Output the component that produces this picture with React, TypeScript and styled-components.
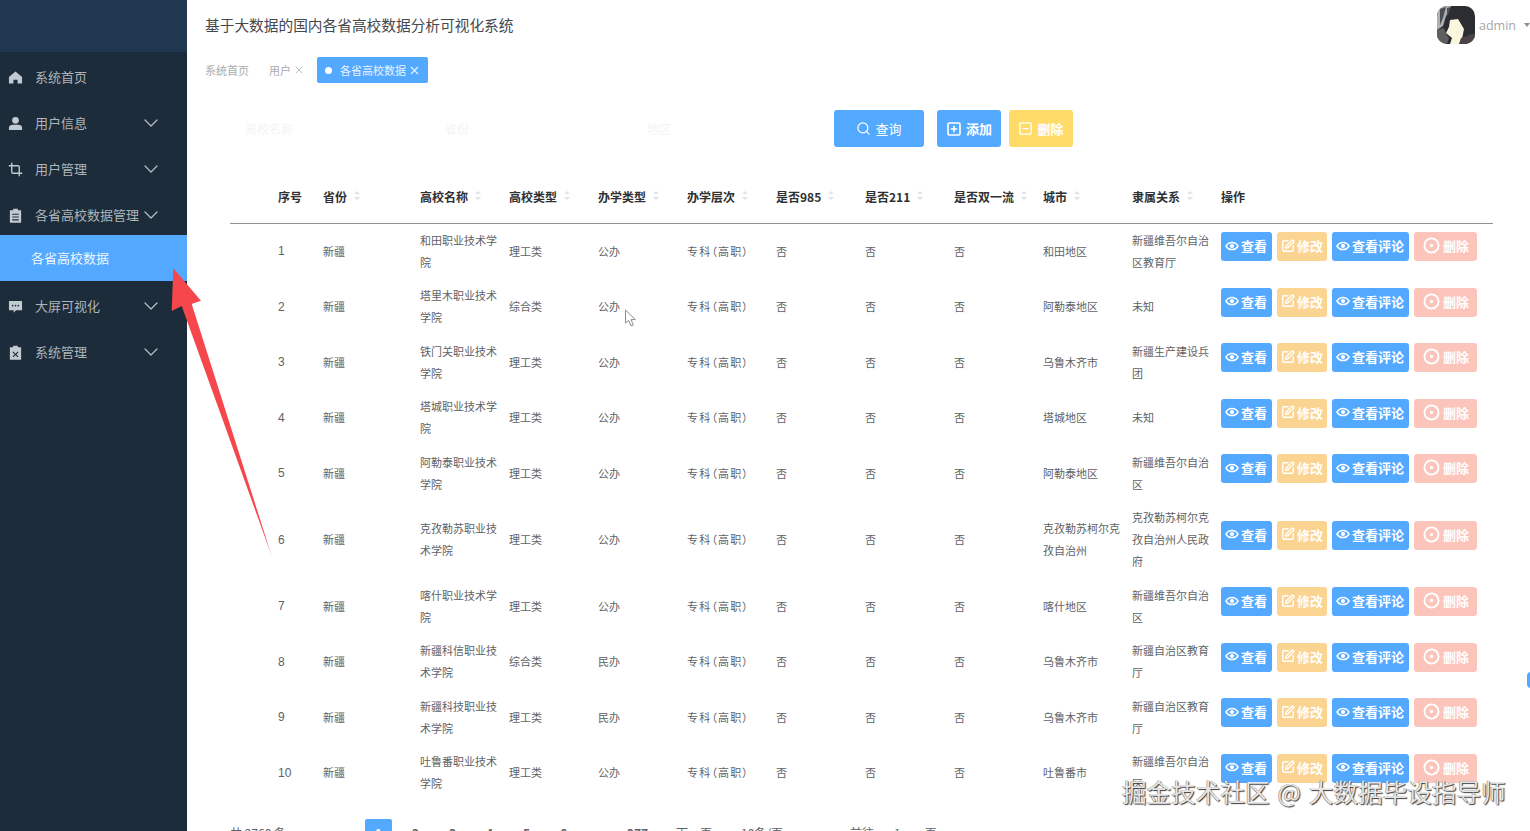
import React from "react";
import styled, { createGlobalStyle } from "styled-components";
import { ChevronDown, Crop, Search, SquarePen, CircleDot, SquarePlus, SquareMinus, X } from "lucide-react";

const FONT = `"Noto Sans CJK SC", "Noto Sans", sans-serif`;

const GlobalStyle = createGlobalStyle`
  html, body, #root {
    margin: 0;
    height: 100%;
  }
  body {
    font-family: ${FONT};
    background: #fff;
    overflow: hidden;
  }
`;

const HomeIcon = () => (
  <svg width="15" height="15" viewBox="0 0 16 16" fill="#c3cad0">
    <path d="M8 1.5 15 7.5V14.5H10.2V10.3H5.8V14.5H1V7.5Z" />
  </svg>
);

const UserIcon = () => (
  <svg width="15" height="15" viewBox="0 0 16 16" fill="#c3cad0">
    <circle cx="8" cy="4.6" r="3.6" />
    <path d="M1 15V12.4C1 10.4 3 9.4 5 9.4H11C13 9.4 15 10.4 15 12.4V15Z" />
  </svg>
);

const OrderIcon = () => (
  <svg width="15" height="15" viewBox="0 0 16 16" fill="#c3cad0">
    <path d="M5.5 0.8H10.5V2.4H14V15.6H2V2.4H5.5Z" />
    <path d="M4.5 6H11.5V7.2H4.5ZM4.5 9H11.5V10.2H4.5ZM4.5 12H11.5V13.2H4.5Z" fill="#1c2c3a" />
  </svg>
);

const CommentIcon = () => (
  <svg width="15" height="15" viewBox="0 0 16 16" fill="#c3cad0">
    <path d="M1 2H15V12H8.6L6 14.6V12H1Z" />
    <circle cx="5" cy="7" r="0.9" fill="#1c2c3a" />
    <circle cx="8" cy="7" r="0.9" fill="#1c2c3a" />
    <circle cx="11" cy="7" r="0.9" fill="#1c2c3a" />
  </svg>
);

const ReleaseIcon = () => (
  <svg width="15" height="15" viewBox="0 0 16 16" fill="#c3cad0">
    <path d="M5.5 0.8H10.5V2.4H14V15.6H2V2.4H5.5Z" />
    <path d="M5.6 7 8 9.2 10.4 7 11.2 7.8 8.9 10 11.2 12.2 10.4 13 8 10.8 5.6 13 4.8 12.2 7.1 10 4.8 7.8Z" fill="#1c2c3a" />
  </svg>
);

const EyeIcon = () => (
  <svg width="14" height="14" viewBox="0 0 14 14" fill="none">
    <path d="M1 7C2.4 4.6 4.5 3.4 7 3.4S11.6 4.6 13 7C11.6 9.4 9.5 10.6 7 10.6S2.4 9.4 1 7Z" stroke="#fff" strokeWidth="1.5" />
    <circle cx="7" cy="7" r="2.1" fill="#fff" />
  </svg>
);

const Avatar = () => (
  <svg width="38" height="38" viewBox="0 0 38 38">
    <defs>
      <clipPath id="avatarClip">
        <rect width="38" height="38" rx="10" />
      </clipPath>
    </defs>
    <g clipPath="url(#avatarClip)">
      <rect width="38" height="38" fill="#2c2d33" />
      <path d="M0 0H14L9 10 6 20 0 24Z" fill="#aeb1b2" />
      <path d="M3 3 9 1 6 12 3 19ZM10 2 14 1 10 11Z" fill="#4b4e55" />
      <path d="M0 24 7 22 9 28 12 32 10 38H0Z" fill="#5e5f60" />
      <path d="M13 14 21 13 27 23 25 33 22 38H13L15 32 9 27 12 21Z" fill="#fbf6df" />
      <path d="M24 32 38 27V38H22Z" fill="#4c4347" />
    </g>
  </svg>
);

const Page = styled.div`
  display: flex;
  height: 831px;
  overflow: hidden;
`;

const Sidebar = styled.aside`
  width: 187px;
  flex-shrink: 0;
  background: #1c2c3a;
  color: #aeb5ba;
`;

const LogoBand = styled.div`
  height: 52px;
  margin-bottom: 2px;
  background: #20384f;
`;

const MenuItem = styled.div`
  height: 46px;
  display: flex;
  align-items: center;
  padding: 0 24px 0 8px;
  font-size: 13px;
`;

const MenuIcon = styled.span`
  width: 15px;
  height: 15px;
  margin-right: 12px;
  display: flex;
  align-items: center;
  justify-content: center;
  flex-shrink: 0;
`;

const MenuLabel = styled.span`
  flex: 1;
  padding-bottom: 2px;
  white-space: nowrap;
`;

const SubItem = styled.div`
  height: 46px;
  margin: -3px 0 2px;
  padding: 0 0 2px 31px;
  box-sizing: border-box;
  display: flex;
  align-items: center;
  background: #53a8ff;
  color: #eef6ff;
  font-size: 13px;
`;

const Main = styled.main`
  flex: 1;
  min-width: 0;
`;

const Header = styled.header`
  height: 52px;
  display: flex;
  align-items: center;
  justify-content: space-between;
  padding: 0 0 0 18px;
`;

const Title = styled.h1`
  margin: 0;
  padding-bottom: 4px;
  font-size: 14.7px;
  font-weight: 400;
  color: #45484d;
`;

const UserBox = styled.div`
  display: flex;
  align-items: center;
  margin-top: -2px;
`;

const AdminName = styled.span`
  margin-left: 4px;
  font-size: 12.5px;
  color: #a4a6a9;
  font-family: "Open Sans", sans-serif;
`;

const Caret = styled.span`
  margin-left: 8px;
  width: 0;
  height: 0;
  border-left: 3px solid transparent;
  border-right: 3px solid transparent;
  border-top: 4px solid #8e9094;
`;

const TagBar = styled.div`
  margin: 5px 0 0 18px;
  height: 26px;
  display: flex;
  align-items: center;
  font-size: 11px;
  color: #a9abae;
`;

const PlainTag = styled.span`
  display: flex;
  align-items: center;
  gap: 2px;
  margin-right: 20px;
  &:nth-child(2) {
    margin-right: 12px;
  }
`;

const ActiveTag = styled.span`
  width: 111px;
  height: 26px;
  box-sizing: border-box;
  padding-left: 8px;
  display: flex;
  align-items: center;
  border-radius: 2px;
  background: #53a8ff;
  color: #e8f3ff;
`;

const TagDot = styled.i`
  width: 7px;
  height: 7px;
  margin-right: 8px;
  border-radius: 50%;
  background: #fff;
`;

const SearchRow = styled.div`
  margin: 27px 0 0 58px;
  height: 37px;
  display: flex;
  align-items: center;
`;

const Placeholder = styled.span<{ $width: number }>`
  width: ${(props) => props.$width}px;
  font-size: 12px;
  color: #f4f4f4;
  flex-shrink: 0;
`;

const ToolButton = styled.button<{ $width: number; $color: string; $gap: number }>`
  width: ${(props) => props.$width}px;
  height: 37px;
  margin-right: ${(props) => props.$gap}px;
  padding: 0;
  display: flex;
  align-items: center;
  justify-content: center;
  gap: 4px;
  border: none;
  border-radius: 3px;
  background: ${(props) => props.$color};
  color: #fff;
  font-family: ${FONT};
  font-size: 13px;
  font-weight: 700;
`;

const QueryLabel = styled.span`
  font-weight: 400;
`;

const Table = styled.table`
  width: 1263px;
  margin: 24px 0 0 43px;
  border-collapse: collapse;
  table-layout: fixed;
`;

const HeadCell = styled.th`
  height: 52px;
  padding: 0;
  box-sizing: border-box;
  border-bottom: 1.5px solid #8f9193;
  text-align: left;
  font-size: 12px;
  font-weight: 700;
  color: #303133;
  &:first-child {
    padding-left: 48px;
  }
`;

const HeadInner = styled.span`
  display: flex;
  align-items: center;
  gap: 7px;
  white-space: nowrap;
`;

const Sorter = styled.span`
  display: flex;
  flex-direction: column;
  gap: 3px;
  margin-top: -2px;
  &::before,
  &::after {
    content: "";
    width: 0;
    height: 0;
    border-left: 3.5px solid transparent;
    border-right: 3.5px solid transparent;
  }
  &::before {
    border-bottom: 3.5px solid #e0e2e5;
  }
  &::after {
    border-top: 3.5px solid #e0e2e5;
  }
`;

const Cell = styled.td`
  padding: 5.25px 8px 6.25px 0;
  font-size: 11px;
  line-height: 22px;
  color: #606266;
  vertical-align: middle;
  word-break: break-all;
  &:first-child {
    padding: 5.75px 0 5.75px 48px;
    font-family: "Liberation Sans", sans-serif;
    font-size: 12px;
  }
`;

const Level = styled.span`
  font-feature-settings: "palt";
  letter-spacing: 1.2px;
  white-space: nowrap;
`;

const Actions = styled.div`
  display: flex;
  gap: 5px;
  margin-bottom: 8px;
`;

const toneColor = { blue: "#53a8ff", orange: "#fcd491", red: "#fcc5bb" };
const tonePadding = { blue: "0 5px 2px 4px", orange: "0 4px 2px 4px", red: "0 8px 2px 9px" };

const ActionButton = styled.button<{ $tone: "blue" | "orange" | "red" }>`
  height: 29px;
  padding: ${(props) => tonePadding[props.$tone]};
  display: flex;
  align-items: center;
  gap: ${(props) => (props.$tone === "red" ? "3px" : "2px")};
  border: none;
  border-radius: 3px;
  background: ${(props) => toneColor[props.$tone]};
  color: #fff;
  font-family: ${FONT};
  font-size: 13px;
  font-weight: 700;
  white-space: nowrap;
`;

const Pagination = styled.div`
  margin: 18px 0 0 43px;
  height: 28px;
  display: flex;
  align-items: center;
  font-size: 12px;
  color: #606266;
`;

const Total = styled.span`
  width: 135px;
  flex-shrink: 0;
`;

const PageNumber = styled.span<{ $active?: boolean }>`
  width: 27px;
  height: 28px;
  margin-right: 10px;
  flex-shrink: 0;
  display: flex;
  align-items: center;
  justify-content: center;
  border-radius: 2px;
  font-weight: 700;
  background: ${(props) => (props.$active ? "#53a8ff" : "transparent")};
  color: ${(props) => (props.$active ? "#fff" : "#606266")};
`;

const PagerText = styled.span<{ $left: number }>`
  margin-left: ${(props) => props.$left}px;
  white-space: nowrap;
`;

const Watermark = styled.div`
  position: absolute;
  left: 1122px;
  top: 773px;
  font-size: 24.6px;
  line-height: 36px;
  word-spacing: 2.5px;
  white-space: nowrap;
  color: #e6e6e6;
  text-shadow: 1px 1px 1px #3c3c3c, -0.5px -0.5px 0.5px #777;
`;

const ArrowLayer = styled.svg`
  position: absolute;
  left: 0;
  top: 0;
  pointer-events: none;
`;

const ScrollNub = styled.i`
  position: absolute;
  right: -5px;
  top: 672px;
  width: 8px;
  height: 16px;
  border-radius: 4px;
  background: #53a8ff;
`;

const menuTop = [
  { label: "系统首页", icon: <HomeIcon />, arrow: false },
  { label: "用户信息", icon: <UserIcon />, arrow: true },
  { label: "用户管理", icon: <Crop size={15} color="#c3cad0" strokeWidth={2.2} />, arrow: true },
  { label: "各省高校数据管理", icon: <OrderIcon />, arrow: true },
];

const menuBottom = [
  { label: "大屏可视化", icon: <CommentIcon /> },
  { label: "系统管理", icon: <ReleaseIcon /> },
];

const columns = [
  { title: "序号", width: 93, sort: false },
  { title: "省份", width: 97, sort: true },
  { title: "高校名称", width: 89, sort: true },
  { title: "高校类型", width: 89, sort: true },
  { title: "办学类型", width: 89, sort: true },
  { title: "办学层次", width: 89, sort: true },
  { title: "是否985", width: 89, sort: true },
  { title: "是否211", width: 89, sort: true },
  { title: "是否双一流", width: 89, sort: true },
  { title: "城市", width: 89, sort: true },
  { title: "隶属关系", width: 89, sort: true },
  { title: "操作", width: 272, sort: false },
];

const rows = [
  ["和田职业技术学院", "理工类", "公办", "和田地区", "新疆维吾尔自治区教育厅"],
  ["塔里木职业技术学院", "综合类", "公办", "阿勒泰地区", "未知"],
  ["铁门关职业技术学院", "理工类", "公办", "乌鲁木齐市", "新疆生产建设兵团"],
  ["塔城职业技术学院", "理工类", "公办", "塔城地区", "未知"],
  ["阿勒泰职业技术学院", "理工类", "公办", "阿勒泰地区", "新疆维吾尔自治区"],
  ["克孜勒苏职业技术学院", "理工类", "公办", "克孜勒苏柯尔克孜自治州", "克孜勒苏柯尔克孜自治州人民政府"],
  ["喀什职业技术学院", "理工类", "公办", "喀什地区", "新疆维吾尔自治区"],
  ["新疆科信职业技术学院", "综合类", "民办", "乌鲁木齐市", "新疆自治区教育厅"],
  ["新疆科技职业技术学院", "理工类", "民办", "乌鲁木齐市", "新疆自治区教育厅"],
  ["吐鲁番职业技术学院", "理工类", "公办", "吐鲁番市", "新疆维吾尔自治区"],
];

const App = () => {
  return (
    <Page>
      <GlobalStyle />
      <Sidebar>
        <LogoBand />
        {menuTop.map((item) => (
          <MenuItem key={item.label}>
            <MenuIcon>{item.icon}</MenuIcon>
            <MenuLabel>{item.label}</MenuLabel>
            {item.arrow && <ChevronDown size={24} strokeWidth={1.2} color="#b9c0c5" />}
          </MenuItem>
        ))}
        <SubItem>各省高校数据</SubItem>
        {menuBottom.map((item) => (
          <MenuItem key={item.label}>
            <MenuIcon>{item.icon}</MenuIcon>
            <MenuLabel>{item.label}</MenuLabel>
            <ChevronDown size={24} strokeWidth={1.2} color="#b9c0c5" />
          </MenuItem>
        ))}
      </Sidebar>
      <Main>
        <Header>
          <Title>基于大数据的国内各省高校数据分析可视化系统</Title>
          <UserBox>
            <Avatar />
            <AdminName>admin</AdminName>
            <Caret />
          </UserBox>
        </Header>
        <TagBar>
          <PlainTag>系统首页</PlainTag>
          <PlainTag>
            用户 <X size={12} strokeWidth={1.5} />
          </PlainTag>
          <ActiveTag>
            <TagDot />
            各省高校数据
            <X size={13} strokeWidth={2} style={{ marginLeft: 2 }} />
          </ActiveTag>
        </TagBar>
        <SearchRow>
          <Placeholder $width={200}>高校名称</Placeholder>
          <Placeholder $width={202}>省份</Placeholder>
          <Placeholder $width={187}>地区</Placeholder>
          <ToolButton $width={90} $color="#53a8ff" $gap={13}>
            <Search size={15} strokeWidth={2} />
            <QueryLabel>查询</QueryLabel>
          </ToolButton>
          <ToolButton $width={64} $color="#53a8ff" $gap={8}>
            <SquarePlus size={16} strokeWidth={2.4} />
            添加
          </ToolButton>
          <ToolButton $width={64} $color="#ffdc6a" $gap={0}>
            <SquareMinus size={15} strokeWidth={2} />
            删除
          </ToolButton>
        </SearchRow>
        <Table>
          <colgroup>
            {columns.map((col) => (
              <col key={col.title} width={col.width} />
            ))}
          </colgroup>
          <thead>
            <tr>
              {columns.map((col) => (
                <HeadCell key={col.title}>
                  <HeadInner>
                    {col.title}
                    {col.sort && <Sorter />}
                  </HeadInner>
                </HeadCell>
              ))}
            </tr>
          </thead>
          <tbody>
            {rows.map((row, index) => (
              <tr key={row[0]}>
                <Cell>{index + 1}</Cell>
                <Cell>新疆</Cell>
                <Cell>{row[0]}</Cell>
                <Cell>{row[1]}</Cell>
                <Cell>{row[2]}</Cell>
                <Cell>
                  <Level>专科（高职）</Level>
                </Cell>
                <Cell>否</Cell>
                <Cell>否</Cell>
                <Cell>否</Cell>
                <Cell>{row[3]}</Cell>
                <Cell>{row[4]}</Cell>
                <Cell>
                  <Actions>
                    <ActionButton $tone="blue">
                      <EyeIcon />
                      查看
                    </ActionButton>
                    <ActionButton $tone="orange">
                      <SquarePen size={14} strokeWidth={2.4} />
                      修改
                    </ActionButton>
                    <ActionButton $tone="blue">
                      <EyeIcon />
                      查看评论
                    </ActionButton>
                    <ActionButton $tone="red">
                      <CircleDot size={17} strokeWidth={2.6} />
                      删除
                    </ActionButton>
                  </Actions>
                </Cell>
              </tr>
            ))}
          </tbody>
        </Table>
        <Pagination>
          <Total>共 2760 条</Total>
          <PageNumber $active>1</PageNumber>
          <PageNumber>2</PageNumber>
          <PageNumber>3</PageNumber>
          <PageNumber>4</PageNumber>
          <PageNumber>5</PageNumber>
          <PageNumber>6</PageNumber>
          <PageNumber>…</PageNumber>
          <PageNumber>277</PageNumber>
          <PagerText $left={15}>下一页</PagerText>
          <PagerText $left={29}>10条/页</PagerText>
          <PagerText $left={67}>前往</PagerText>
          <PagerText $left={20}>1</PagerText>
          <PagerText $left={24}>页</PagerText>
        </Pagination>
      </Main>
      <ArrowLayer width="1530" height="831" viewBox="0 0 1530 831">
        <polygon
          points="173.3,268.3 201,300.7 191.7,304 271.7,556 181.7,306 171.7,311"
          fill="#f6484c"
        />
        <path
          d="M625.5 310V323L628.6 320.4 631 326 633.4 325 631 319.6H635.4Z"
          fill="#fff"
          stroke="#8b8d90"
          strokeWidth="1"
        />
      </ArrowLayer>
      <Watermark>掘金技术社区 @ 大数据毕设指导师</Watermark>
      <ScrollNub />
    </Page>
  );
};

export default App;
